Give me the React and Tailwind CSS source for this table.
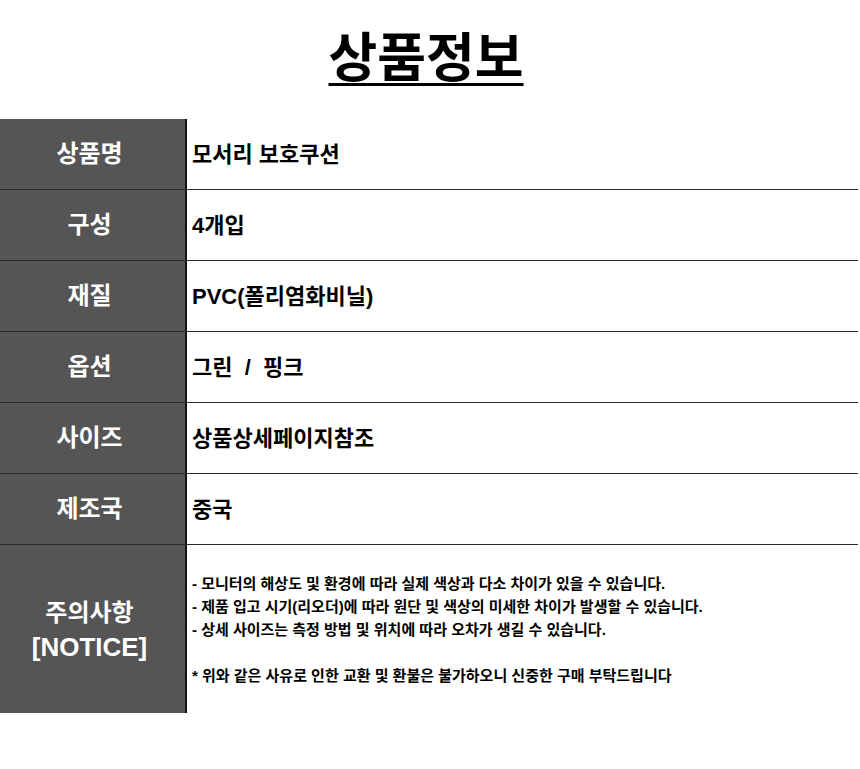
const FONT = { fontFamily: '"Liberation Sans", "Noto Sans CJK KR", sans-serif' };

const ROWS = [
  { label: "상품명", value: "모서리 보호쿠션" },
  { label: "구성", value: "4개입" },
  { label: "재질", value: "PVC(폴리염화비닐)" },
  { label: "옵션", value: "그린  /  핑크" },
  { label: "사이즈", value: "상품상세페이지참조" },
  { label: "제조국", value: "중국" },
];

const NOTICE = [
  "- 모니터의 해상도 및 환경에 따라 실제 색상과 다소 차이가 있을 수 있습니다.",
  "- 제품 입고 시기(리오더)에 따라 원단 및 색상의 미세한 차이가 발생할 수 있습니다.",
  "- 상세 사이즈는 측정 방법 및 위치에 따라 오차가 생길 수 있습니다.",
];

const App = () => {
  return (
    <div className="w-[860px] bg-white text-black" style={FONT}>
      {/* 제목 */}
      <div className="h-[119px] flex items-center justify-center pb-[2px] pr-[8px]">
        <h1 className="text-[53px] font-bold leading-none underline decoration-[3px] underline-offset-[6px]">
          상품정보
        </h1>
      </div>

      {/* 정보 테이블 */}
      <div className="w-[858px]">
        {ROWS.map((row) => (
          <div
            key={row.label}
            className="grid grid-cols-[187px_1fr] h-[71px] border-b border-[#2a2a2a]"
          >
            <div className="bg-[#555555] border-r-2 border-[#111] flex items-center justify-center pr-[6px] text-white text-[24px] font-bold">
              {row.label}
            </div>
            <div className="flex items-center pl-[5px] text-[22px] font-bold whitespace-pre">
              {row.value}
            </div>
          </div>
        ))}

        <div className="grid grid-cols-[187px_1fr] h-[168px]">
          <div className="bg-[#555555] border-r-2 border-[#111] flex flex-col items-center justify-center pr-[6px] text-white font-bold leading-[34px] pt-[2px]">
            <span className="text-[24px]">주의사항</span>
            <span className="text-[26px]">[NOTICE]</span>
          </div>
          <div className="flex flex-col justify-center pl-[5px] text-[15px] font-bold leading-[23px]">
            {NOTICE.map((line) => (
              <p key={line}>{line}</p>
            ))}
            <p>&nbsp;</p>
            <p>* 위와 같은 사유로 인한 교환 및 환불은 불가하오니 신중한 구매 부탁드립니다</p>
          </div>
        </div>
      </div>
    </div>
  );
};

export default App;
